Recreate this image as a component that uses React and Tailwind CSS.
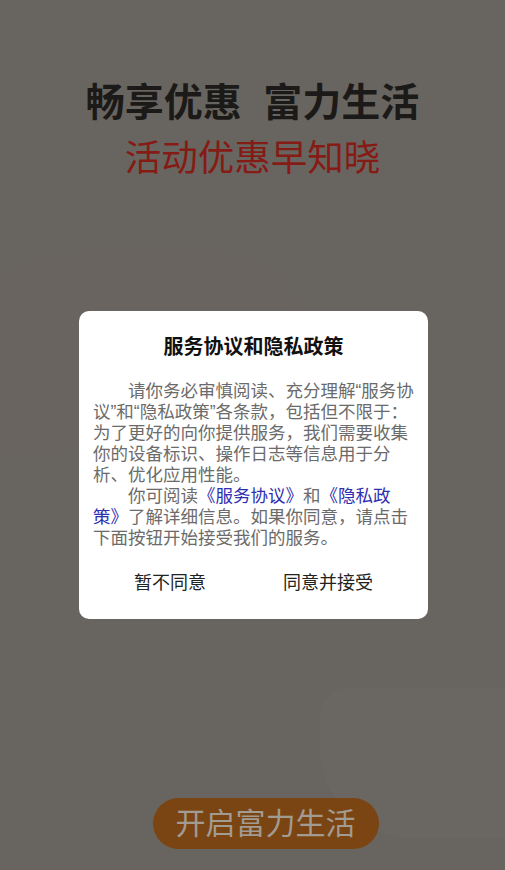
const FONT = '"Liberation Sans", "Noto Sans CJK SC", sans-serif';

export default function App() {
  return (
    <div
      className="relative w-[505px] h-[870px] overflow-hidden bg-[#686560] flex flex-col items-center"
      style={{ fontFamily: FONT }}
    >
      {/* faint background shapes */}
      <div className="absolute left-[-140px] top-[255px] w-[440px] h-[190px] rounded-[50%] bg-[#6a6460] opacity-70 rotate-[-12deg]" />
      <div className="absolute left-[320px] top-[688px] w-[260px] h-[150px] rounded-bl-[90px] rounded-tl-[30px] bg-[#6a6661]" />

      <h1 className="relative mt-[79px] text-[39px] leading-[48px] font-bold text-[#1c1a18] whitespace-pre">
        畅享优惠  富力生活
      </h1>
      <p className="relative mt-[10px] text-[36.5px] leading-[44px] text-[#851b15]">
        活动优惠早知晓
      </p>

      <button className="relative mt-auto mb-[21px] ml-[26px] w-[226px] h-[51px] rounded-full bg-[#7a4512] text-[30px] leading-[36px] text-[#a29b92]">
        开启富力生活
      </button>

      <div className="absolute left-[79px] top-[311px] w-[349px] h-[308px] rounded-[10px] bg-white flex flex-col">
        <h2 className="pt-[24px] text-center text-[20px] leading-[24px] font-bold text-[#111]">
          服务协议和隐私政策
        </h2>
        <div className="mt-[22px] px-[14px] text-[17.5px] leading-[21px] text-[#6b6b6b]">
          <div className="whitespace-nowrap pl-[35px]">请你务必审慎阅读、充分理解“服务协</div>
          <div className="whitespace-nowrap">议”和“隐私政策”各条款，包括但不限于：</div>
          <div className="whitespace-nowrap">为了更好的向你提供服务，我们需要收集</div>
          <div className="whitespace-nowrap">你的设备标识、操作日志等信息用于分</div>
          <div className="whitespace-nowrap">析、优化应用性能。</div>
          <div className="whitespace-nowrap pl-[35px]">
            你可阅读<span className="text-[#2e2eb0]">《服务协议》</span>和<span className="text-[#2e2eb0]">《隐私政</span>
          </div>
          <div className="whitespace-nowrap">
            <span className="text-[#2e2eb0]">策》</span>了解详细信息。如果你同意，请点击
          </div>
          <div className="whitespace-nowrap">下面按钮开始接受我们的服务。</div>
        </div>
        <div className="mt-[23px] px-[55px] flex justify-between text-[18px] leading-[22px] text-[#222]">
          <button>暂不同意</button>
          <button>同意并接受</button>
        </div>
      </div>
    </div>
  );
}
